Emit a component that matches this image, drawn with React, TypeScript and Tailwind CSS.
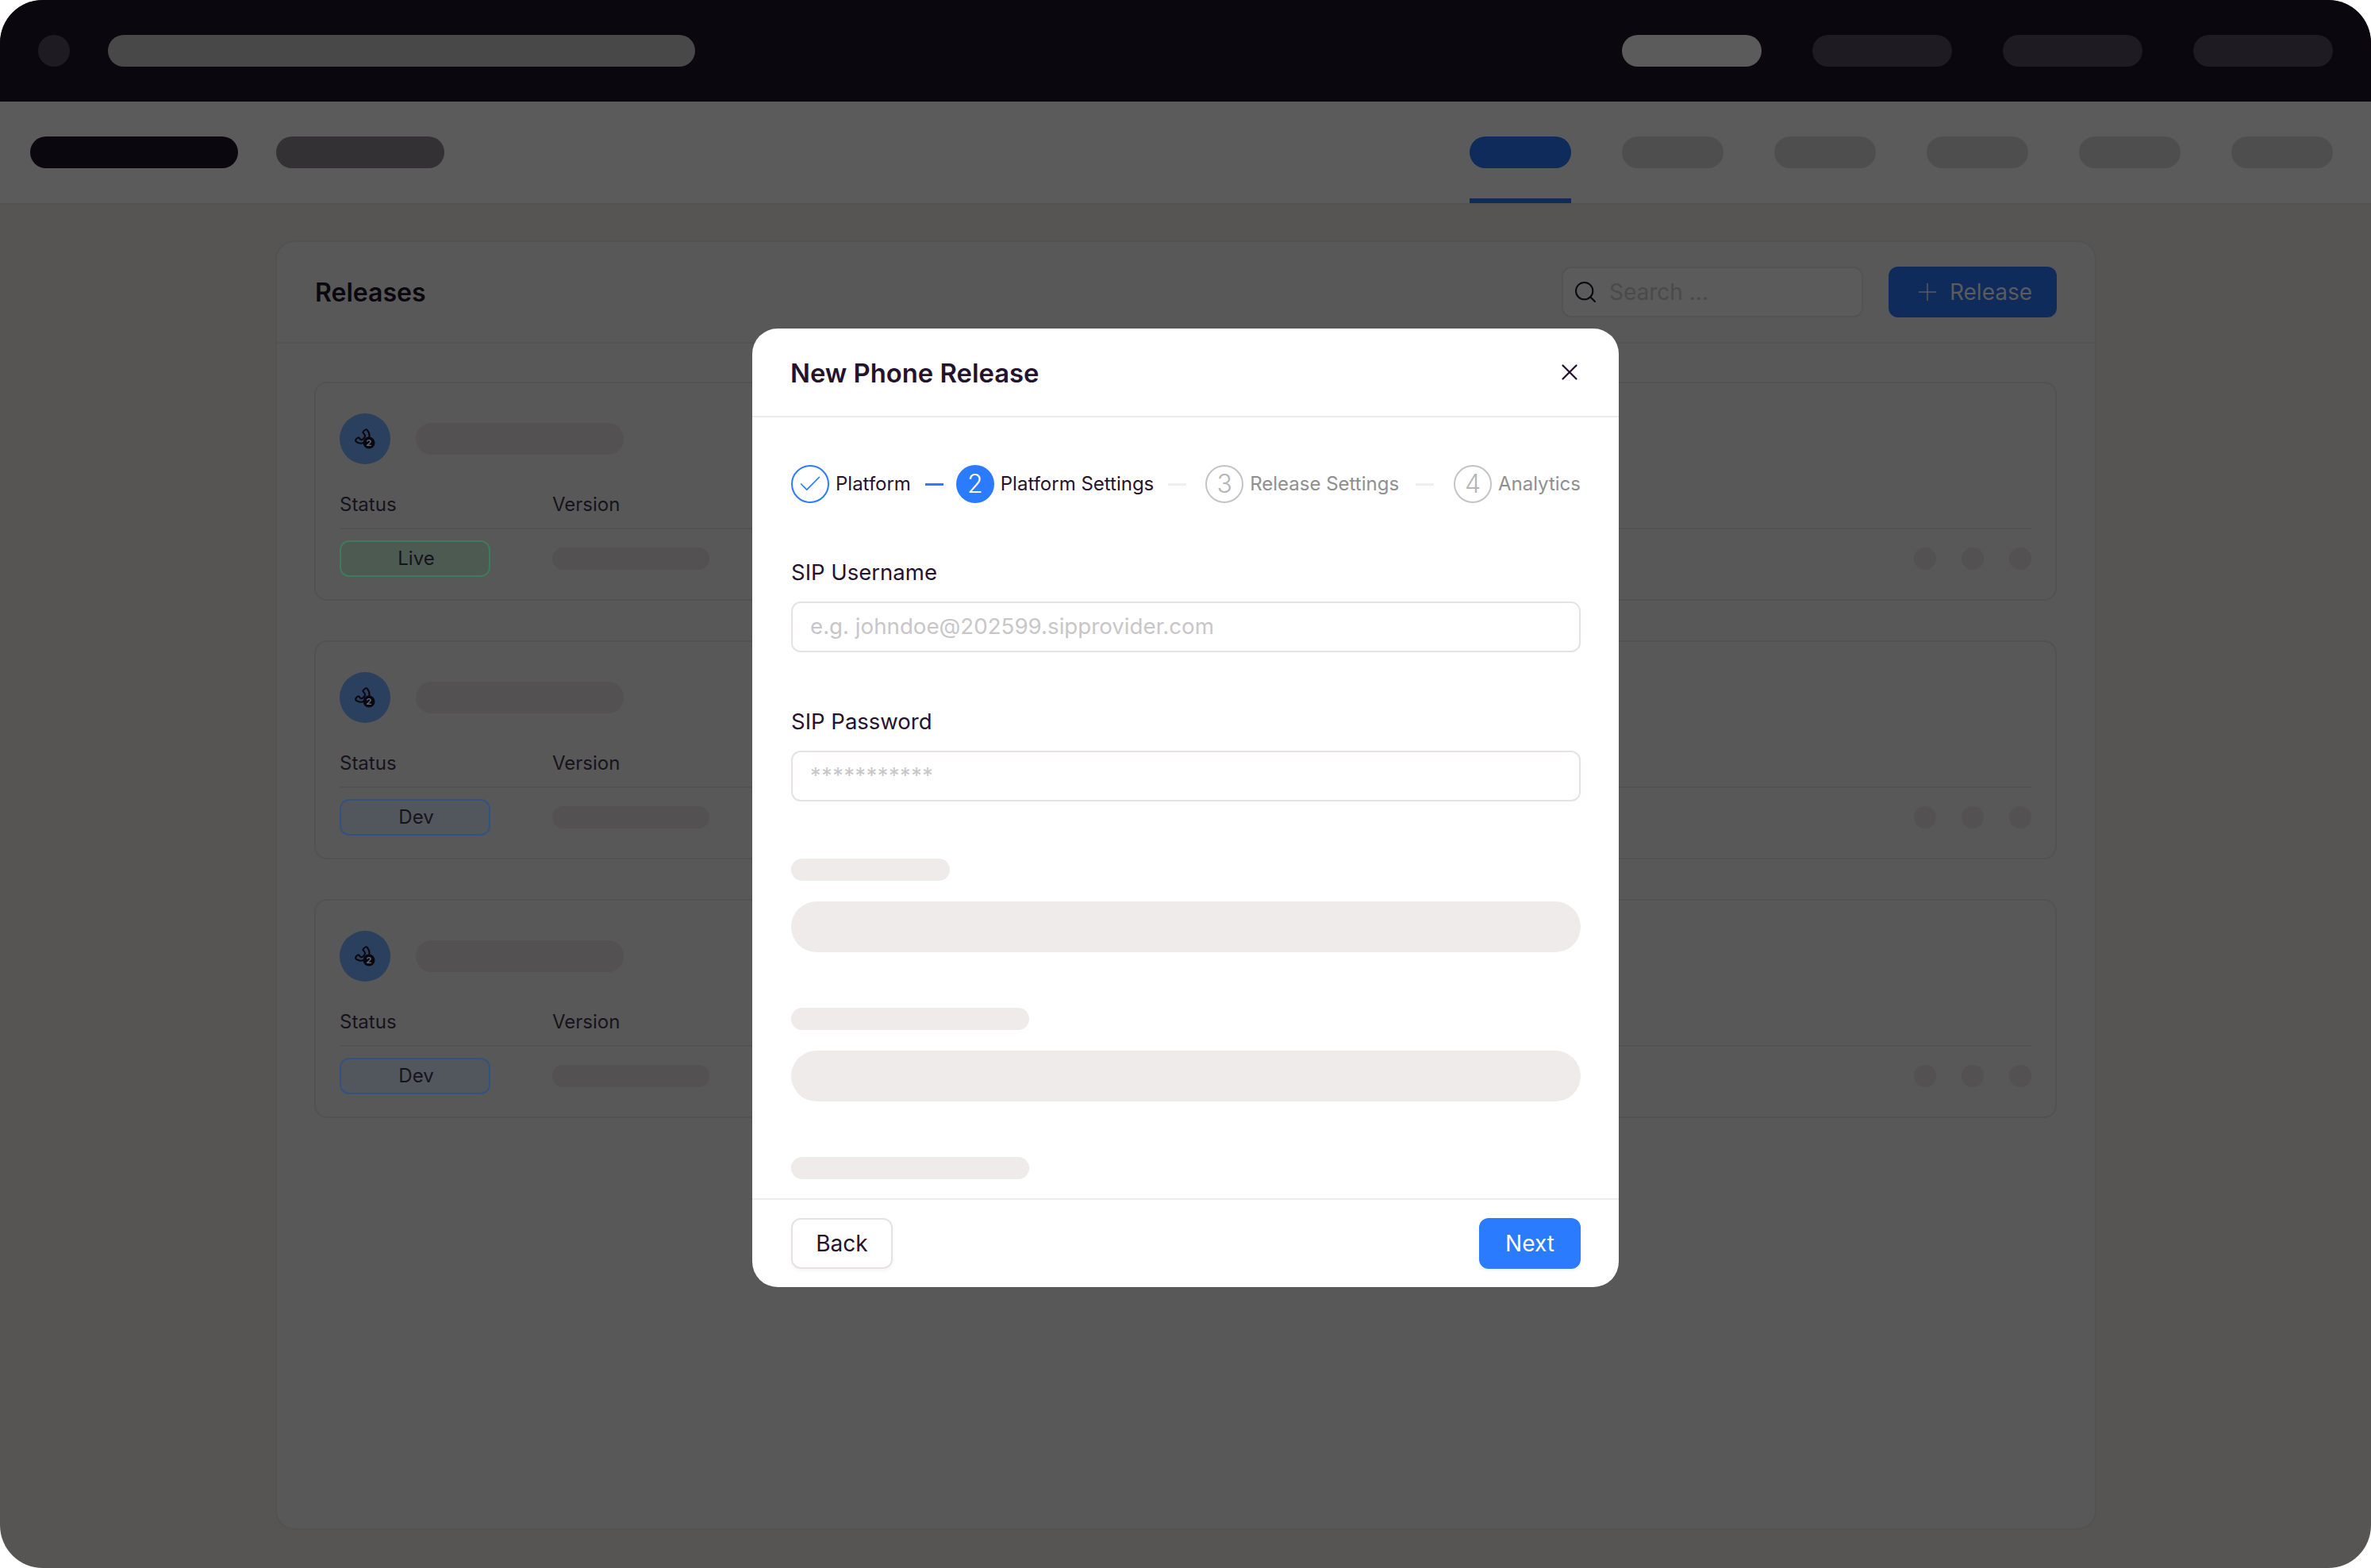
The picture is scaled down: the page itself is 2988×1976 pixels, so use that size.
import * as React from 'react';
import { Check, Plus, Search, X } from 'lucide-react';

const sans = 'font-["Inter","Liberation_Sans",sans-serif]';

const PhoneBadge = () => (
  <svg width="30" height="30" viewBox="0 0 30 30" fill="none">
    <path
      d="M15.5 3.5c-1.6 1-2.8 2.2-3.2 3.4l2.6 3.4c.4.9-.5 3.2-2 4.6-1.2 1.1-2.6 1.5-3.4 1.1L6.9 13.3c-1.4.3-2.8 1.4-3.6 2.9-.5 1 .2 2.1 1.3 2.9 2.6 1.8 5.6 2 8.6.9 3.7-1.4 6.7-4.4 7.3-8.2.3-2.1-.6-5-2.6-7.6-.6-.8-1.2-1.1-1.9-.7z"
      stroke="#0b070e"
      strokeWidth="2"
      strokeLinejoin="round"
    />
    <circle cx="20" cy="20" r="7.5" fill="#0b070e" />
    <text x="20" y="24" textAnchor="middle" fontSize="11" fontWeight="700" fill="#5b6a80" fontFamily="Inter, sans-serif">2</text>
  </svg>
);

const ReleaseRow = ({ status }: { status: 'Live' | 'Dev' }) => (
  <div className="flex h-[276px] flex-col rounded-2xl border-2 border-[#525252] pl-[30px] pr-[30px] pt-[38px]">
    <div className="flex items-center gap-[32px]">
      <div className="flex h-[64px] w-[64px] items-center justify-center rounded-full bg-[#2b3f5f]">
        <PhoneBadge />
      </div>
      <div className="h-[40px] w-[262px] rounded-full bg-[#545152]" />
    </div>
    <div className="mt-[35px] flex h-[47px] items-start border-b-2 border-[#525252] text-[24px] leading-[32px] text-[#17131c]">
      <span className="w-[268px]">Status</span>
      <span>Version</span>
    </div>
    <div className="mt-[14px] flex items-center">
      <div
        className={
          status === 'Live'
            ? 'flex h-[46px] w-[190px] items-center justify-center rounded-xl border-2 border-[#3f7a5e] bg-[#4c5a51] pl-[3px] text-[24px] text-[#17131c]'
            : 'flex h-[46px] w-[190px] items-center justify-center rounded-xl border-2 border-[#35517f] bg-[#52565d] pl-[3px] text-[24px] text-[#17131c]'
        }
      >
        {status}
      </div>
      <div className="ml-[78px] h-[28px] w-[198px] rounded-full bg-[#545152]" />
      <div className="ml-auto flex gap-[32px]">
        <div className="h-[28px] w-[28px] rounded-full bg-[#545152]" />
        <div className="h-[28px] w-[28px] rounded-full bg-[#545152]" />
        <div className="h-[28px] w-[28px] rounded-full bg-[#545152]" />
      </div>
    </div>
  </div>
);

const Step = ({ n, label, state }: { n: number; label: string; state: 'done' | 'active' | 'todo' }) => (
  <div className="flex items-center gap-[8px] whitespace-nowrap">
    {state === 'done' && (
      <div className="flex h-[48px] w-[48px] items-center justify-center rounded-full border-2 border-[#2b7bff]">
        <Check size={34} strokeWidth={1.2} color="#2b7bff" />
      </div>
    )}
    {state === 'active' && (
      <div className="flex h-[48px] w-[48px] items-center justify-center rounded-full bg-[#2b7bff] text-[32px] font-light text-white">{n}</div>
    )}
    {state === 'todo' && (
      <div className="flex h-[48px] w-[48px] items-center justify-center rounded-full border-2 border-[#c4c4c4] text-[32px] font-light text-[#b5b5b5]">{n}</div>
    )}
    <span className={state === 'todo' ? 'text-[24px] text-[#8f8f8f]' : 'text-[24px] text-[#25132e]'}>{label}</span>
  </div>
);

const Field = ({ label, placeholder, small }: { label: string; placeholder: string; small?: boolean }) => (
  <div>
    <div className="text-[27.5px] leading-[36px] text-[#25132e]">{label}</div>
    <div className="mt-[19px] flex h-[64px] items-center rounded-xl border-2 border-[#e6e2e3] pl-[22px]">
      {small ? (
        <span className="text-[27px] tracking-[0.6px] text-[#c9c6c9]">{placeholder}</span>
      ) : (
        <span className="text-[27.7px] text-[#c9c6c9]">{placeholder}</span>
      )}
    </div>
  </div>
);

const App = () => {
  return (
    <div className={`relative h-[1976px] w-[2988px] overflow-hidden bg-white ${sans}`}>
      <div className="flex h-full flex-col overflow-hidden rounded-[54px] bg-[#565553]">
        <div className="flex h-[128px] shrink-0 items-center bg-[#0b070e] pl-[48px] pr-[48px]">
          <div className="h-[40px] w-[40px] rounded-full bg-[#1f1b22]" />
          <div className="ml-[48px] h-[40px] w-[740px] rounded-full bg-[#484848]" />
          <div className="ml-auto flex gap-[64px]">
            <div className="h-[40px] w-[176px] rounded-full bg-[#5b5b5b]" />
            <div className="h-[40px] w-[176px] rounded-full bg-[#1f1b22]" />
            <div className="h-[40px] w-[176px] rounded-full bg-[#1f1b22]" />
            <div className="h-[40px] w-[176px] rounded-full bg-[#1f1b22]" />
          </div>
        </div>

        <div className="flex h-[130px] shrink-0 items-center border-b-2 border-[#535352] bg-[#5b5b5b] pl-[38px] pr-[48px]">
          <div className="h-[40px] w-[262px] rounded-full bg-[#0b070e]" />
          <div className="ml-[48px] h-[40px] w-[212px] rounded-full bg-[#333134]" />
          <div className="ml-auto flex h-full gap-[64px]">
            <div className="relative flex h-full w-[128px] items-center">
              <div className="h-[40px] w-[128px] rounded-full bg-[#0f2b5c]" />
              <div className="absolute bottom-0 left-0 h-[6px] w-[128px] bg-[#0f2b5c]" />
            </div>
            <div className="h-[40px] w-[128px] self-center rounded-full bg-[#4e4e4e]" />
            <div className="h-[40px] w-[128px] self-center rounded-full bg-[#4e4e4e]" />
            <div className="h-[40px] w-[128px] self-center rounded-full bg-[#4e4e4e]" />
            <div className="h-[40px] w-[128px] self-center rounded-full bg-[#4e4e4e]" />
            <div className="h-[40px] w-[128px] self-center rounded-full bg-[#4e4e4e]" />
          </div>
        </div>

        <div className="flex-1 pl-[347px] pr-[346px] pt-[45px]">
          <div className="h-[1625px] rounded-3xl border-2 border-[#525252] bg-[#585858]">
            <div className="flex h-[128px] items-center justify-between border-b-2 border-[#535353] pl-[48px] pr-[48px]">
              <span className="mt-[2px] text-[32px] font-semibold text-[#0b070e]">Releases</span>
              <div className="flex items-center gap-[32px]">
                <div className="flex h-[64px] w-[380px] items-center gap-[14px] rounded-xl border-2 border-[#535353] bg-[#5b5b5b] pl-[12px]">
                  <Search size={32} strokeWidth={1.5} color="#0b070e" />
                  <span className="text-[28px] text-[#4a4a4a]">Search ...</span>
                </div>
                <div className="flex h-[64px] w-[212px] items-center justify-center gap-[10px] rounded-xl bg-[#0f2b5c] text-[28px] text-[#5b5b5b]">
                  <Plus size={36} strokeWidth={1} color="#5b5b5b" />
                  <span>Release</span>
                </div>
              </div>
            </div>
            <div className="flex flex-col gap-[50px] pl-[47px] pr-[48px] pt-[48px]">
              <ReleaseRow status="Live" />
              <ReleaseRow status="Dev" />
              <ReleaseRow status="Dev" />
            </div>
          </div>
        </div>
      </div>

      {/* dialog */}
      <div className="absolute left-[948px] top-[414px] flex h-[1208px] w-[1092px] flex-col rounded-[32px] bg-white">
        <div className="flex h-[112px] shrink-0 items-center justify-between border-b-2 border-[#efebeb] pl-[48px] pr-[48px]">
          <span className="mt-[3px] text-[32.8px] font-semibold text-[#25132e]">New Phone Release</span>
          <X size={34} strokeWidth={1.6} color="#25132e" className="-mr-[3px]" />
        </div>
        <div className="flex-1 pl-[49px] pr-[48px] pt-[60px]">
          <div className="flex items-center">
            <Step n={1} label="Platform" state="done" />
            <div className="ml-[18px] mr-[16px] h-[3px] w-[24px] bg-[#2b7bff]" />
            <Step n={2} label="Platform Settings" state="active" />
            <div className="ml-[18px] mr-[24px] h-[3px] w-[24px] bg-[#efefef]" />
            <Step n={3} label="Release Settings" state="todo" />
            <div className="ml-[21px] mr-[25px] h-[3px] w-[24px] bg-[#efefef]" />
            <Step n={4} label="Analytics" state="todo" />
          </div>
          <div className="mt-[69px] flex flex-col gap-[69px]">
            <Field label="SIP Username" placeholder="e.g. johndoe@202599.sipprovider.com" />
            <Field label="SIP Password" placeholder="***********" small />
          </div>
          <div className="mt-[72px] h-[28px] w-[200px] rounded-full bg-[#efebeb]" />
          <div className="mt-[26px] h-[64px] rounded-full bg-[#efebeb]" />
          <div className="mt-[70px] h-[28px] w-[300px] rounded-full bg-[#efebeb]" />
          <div className="mt-[26px] h-[64px] rounded-full bg-[#efebeb]" />
          <div className="mt-[70px] h-[28px] w-[300px] rounded-full bg-[#efebeb]" />
        </div>
        <div className="flex h-[112px] shrink-0 items-center justify-between border-t-2 border-[#efebeb] pl-[49px] pr-[48px]">
          <div className="flex h-[64px] w-[128px] items-center justify-center rounded-xl border-2 border-[#e6e2e3] text-[28px] text-[#25132e] shadow-[0_2px_4px_#f4f2f6]">Back</div>
          <div className="flex h-[64px] w-[128px] items-center justify-center rounded-xl bg-[#2b7bff] text-[28px] text-white shadow-[0_2px_4px_#f4f2f6]">Next</div>
        </div>
      </div>
    </div>
  );
};

export default App;
